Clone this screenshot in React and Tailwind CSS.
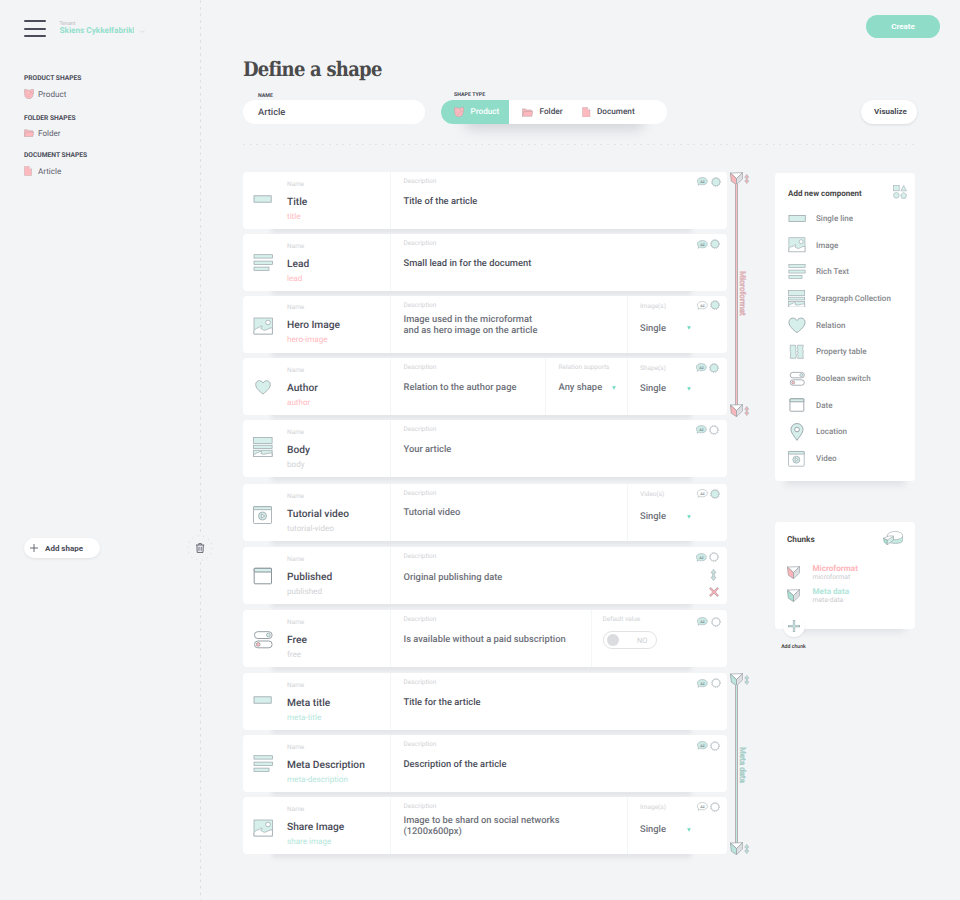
import React from 'react';
import clsx from 'clsx';

const LINE = '#9aa5ab';
const MINT = '#d6efeb';

/* ---------- icons ---------- */

function SingleLineIcon({ className }) {
  return (
    <svg className={className} viewBox="0 0 20 20" fill={MINT} stroke={LINE} strokeWidth="0.8">
      <rect x="1" y="6.8" width="17.2" height="6.4" />
    </svg>
  );
}

function RichTextIcon({ className }) {
  return (
    <svg className={className} viewBox="0 0 20 20" fill={MINT} stroke={LINE} strokeWidth="0.7">
      <rect x="1" y="1.7" width="18.6" height="3.4" />
      <rect x="1" y="8.1" width="18.6" height="3.4" />
      <rect x="1" y="14.1" width="15" height="3.4" />
    </svg>
  );
}

function ImageIcon({ className }) {
  return (
    <svg className={className} viewBox="0 0 20 20" fill={MINT} stroke={LINE} strokeWidth="0.7">
      <rect x="1" y="2" width="18.4" height="16" />
      <path
        d="M1 14.5c1.500-1.500 3-2.800 4.800-2.700.6-1.600 2.300-2.200 3.500-1.200-1 .2-1.600.9-1.400 2 1.500.2 2 1.700 3.600 1.700 2.400-.1 4.500-2.800 7.900-2.500V18H1z"
        fill="#fff"
      />
      <circle cx="15" cy="6.500" r="2.300" fill="#fff" />
    </svg>
  );
}

function CollectionIcon({ className }) {
  return (
    <svg className={className} viewBox="0 0 20 20" fill={MINT} stroke={LINE} strokeWidth="0.7">
      <rect x="0.500" y="0.400" width="18.600" height="6" />
      <rect x="0.500" y="8.200" width="18.600" height="3.200" />
      <rect x="0.500" y="13.200" width="18.600" height="6.400" />
      <path
        d="M.5 18c2-1.500 3.500-2.500 5-2.400.8-1.400 2.500-1.500 3.500-.6-.9.4-1.200 1-.8 1.800 3 1.500 5.500-.8 10.900-1v3.800H.5z"
        fill="#fff"
      />
    </svg>
  );
}

function HeartIcon({ className }) {
  return (
    <svg className={className} viewBox="0 0 20 20" fill={MINT} stroke={LINE} strokeWidth="0.8">
      <path d="M10 17C6.500 14.300 2.700 11.200 2.700 7.500c0-4.200 5.200-5.200 7.300-1.500 2.100-3.700 7.300-2.700 7.300 1.500 0 3.700-3.800 6.800-7.300 9.500z" />
    </svg>
  );
}

function TableIcon({ className }) {
  return (
    <svg className={className} viewBox="0 0 20 20" fill={MINT} stroke={LINE} strokeWidth="0.7">
      <path d="M2.500 2.500h6.300l-.5 2 1 1.500-.8 2 1 2-.8 2 1 1.700-.7 3.800H2.500l.6-5-.6-3z" />
      <path d="M11 2.500h6.500l-.8 4 .8 3-.5 4 .5 4H11l.6-3-1-1.500.9-2-.9-2 .8-2-.9-2z" />
    </svg>
  );
}

function SwitchIcon({ className }) {
  return (
    <svg className={className} viewBox="0 0 20 20" fill="#fff" stroke="#8b949b" strokeWidth="0.9">
      <rect x="1.500" y="1.700" width="17.600" height="6.800" rx="3.300" />
      <circle cx="15.400" cy="5.100" r="1.900" fill={MINT} strokeWidth="0.700" />
      <rect x="1.500" y="11" width="17.600" height="6.800" rx="3.300" />
      <circle cx="5.200" cy="14.400" r="1.900" fill="#ffb9bd" strokeWidth="0.700" />
    </svg>
  );
}

function DateIcon({ className }) {
  return (
    <svg className={className} viewBox="0 0 20 20" fill="#fff" stroke="#8b949b" strokeWidth="1">
      <rect x="1.200" y="2.300" width="17.300" height="15.500" rx="0.800" />
      <rect x="1.200" y="2.300" width="17.300" height="3.700" rx="0.600" fill={MINT} />
    </svg>
  );
}

function VideoIcon({ className }) {
  return (
    <svg className={className} viewBox="0 0 20 20" fill="#fff" stroke={LINE} strokeWidth="0.8">
      <rect x="0.500" y="1.700" width="18" height="16.800" rx="0.800" />
      <rect x="0.500" y="1.700" width="18" height="3" rx="0.500" fill={MINT} />
      <circle cx="9.500" cy="11" r="4" fill={MINT} />
      <path d="M8.300 8.900v4.200l3.500-2.100z" fill="#fff" />
    </svg>
  );
}

function PinIcon({ className }) {
  return (
    <svg className={className} viewBox="0 0 20 20" fill={MINT} stroke="#8b949b" strokeWidth="0.9">
      <path d="M10 19.300C6.800 14.500 3.300 10.800 3.300 7.100a6.700 6.500 0 0 1 13.400 0c0 3.700-3.500 7.400-6.700 12.200z" />
      <circle cx="10" cy="7.200" r="2.600" fill="#fff" />
    </svg>
  );
}

function ProductIcon({ className }) {
  return (
    <svg className={className} viewBox="0 0 20 20" fill="#fdb9be" stroke="#b9a0a6" strokeWidth="1">
      <path d="M.8 1l5 .3 3 1h4L14 1h5.300v8.500L18 11c.2 5-2.900 8.200-7.500 8.400C5.500 19.600 2 17 1.600 12.500 1.600 9 .5 5 .8 1z" />
      <path d="M12.300 3l.7 4.800 5 .7M2 5.500L5.300 4" fill="none" />
      <path d="M5 10.500h1.500M11 11h1.500M7 14.500c1.500 1 3.500.5 4.500-.8" fill="none" />
    </svg>
  );
}

function FolderIcon({ className }) {
  return (
    <svg className={className} viewBox="0 0 20 20" fill="#fdb9be" stroke="#b39aa0" strokeWidth="0.9">
      <path d="M.8 17V3.500h6L8.300 5.500H17.500v3" />
      <path d="M.8 17L3.500 8h16l-1.700 9z" />
    </svg>
  );
}

function DocIcon({ className }) {
  return (
    <svg className={className} viewBox="0 0 16 20" fill="#fdb9be" stroke="#c0a3a9" strokeWidth="0.9">
      <path d="M1 .8h9l5 5v13.400H1z" />
      <path d="M10 .8v5h5" fill="#fff" />
    </svg>
  );
}

function Wedge({ className, color }) {
  return (
    <svg className={className} viewBox="0 0 38 38" stroke="#8f9499" strokeWidth="1.800" strokeLinejoin="round">
      <path d="M1 3L37 2 19 19z" fill="#fff" />
      <path d="M1 3l18 16v18L4 27z" fill={color} />
      <path d="M19 19L37 2v18L19 37z" fill="#e3e5e8" />
      <path d="M24 18v10M29 13v10M33 9v10" stroke="#c9cdd1" strokeWidth="1.200" />
    </svg>
  );
}

function UpDown({ className, color }) {
  return (
    <svg className={className} viewBox="0 0 10 18" fill={color} stroke={LINE} strokeWidth="0.900">
      <path d="M5 .6L8.800 5.800H6.200v6.400h2.600L5 17.400 1.200 12.200h2.600V5.800H1.200z" />
    </svg>
  );
}

function CheeseIcon({ className }) {
  return (
    <svg className={className} viewBox="0 0 62 44" fill="#fff" stroke="#8f9aa0" strokeWidth="1.600" strokeLinejoin="round">
      <path d="M13 14v15c6 12 46 12 47-1V14z" fill="#c5eae2" />
      <ellipse cx="36.500" cy="14" rx="23.500" ry="12.500" />
      <path d="M1 22l18-7h13l-1 10-12 5z" />
      <path d="M1 22l12 6v14L3 33z" fill="#a9e2d5" />
      <path d="M13 28l18-12v12L13 42z" fill="#d6efeb" />
    </svg>
  );
}

function ShapesIcon({ className }) {
  return (
    <svg className={className} viewBox="0 0 42 42" fill={MINT} stroke={LINE} strokeWidth="1.600">
      <rect x="1.500" y="1.500" width="17" height="16" />
      <path d="M32 1.500l8.500 16h-17z" />
      <circle cx="10" cy="31" r="8.500" />
      <path d="M32 22.500l9 6.500-3.500 11h-11L23 29z" />
    </svg>
  );
}

function TranslateBadge({ on }) {
  return (
    <svg className="h-[9px] w-[11px]" viewBox="0 0 33 27">
      <path
        d="M16 1.500c8.500 0 15 4.500 15 11s-6 11-15 11c-3 0-5.500-.5-8-1.500L3 25l1.500-5C2 18 1 15 1 12.500c0-6.500 7-11 15-11z"
        fill={on ? '#cdebe6' : '#fff'}
        stroke={LINE}
        strokeWidth="1.500"
      />
      <text x="16.500" y="16.500" textAnchor="middle" fontSize="11" fontWeight="700" fontFamily="Roboto" fill="#7e8a90">
        AZ
      </text>
    </svg>
  );
}

function Gear({ on }) {
  return (
    <svg className="size-[10px]" viewBox="0 0 30 30">
      <circle cx="15" cy="15" r="13.300" fill="none" stroke={LINE} strokeWidth="2" strokeDasharray="3 3.960" />
      <circle cx="15" cy="15" r="11.800" fill={on ? '#d3efea' : '#fff'} stroke="#a9b2b7" strokeWidth="2" />
    </svg>
  );
}

/* ---------- data ---------- */

const fields = [
  { name: 'Title', slug: 'title', tone: 'pink', Icon: SingleLineIcon, iconTop: 'pt-[16.5px]', desc: ['Title of the article'], strong: true, az: true, gear: true, gap: 'mb-[5px]', tools: 'top-[4.7px] right-[6.5px]' },
  { name: 'Lead', slug: 'lead', tone: 'pink', Icon: RichTextIcon, iconTop: 'pt-[19px]', desc: ['Small lead in for the document'], strong: true, az: true, gear: true, gap: 'mb-[4.500px]', tools: 'top-[5.2px] right-[7px]' },
  { name: 'Hero Image', slug: 'hero-image', tone: 'pink', Icon: ImageIcon, iconTop: 'pt-[20.7px]', desc: ['Image used in the microformat', 'and as hero image on the article'], descTop: '-mt-[0.5px]', az: false, gear: true, gap: 'mb-[5.500px]', tools: 'top-[4.7px] right-[7px]', select: 'Image(s)', selectLead: 'leading-[24px]' },
  { name: 'Author', slug: 'author', tone: 'pink', Icon: HeartIcon, iconTop: 'pt-[18.5px]', desc: ['Relation to the author page'], az: true, gear: true, gap: 'mb-[5px]', tools: 'top-[4.7px] right-[7.7px]', relation: true, select: 'Shape(s)', selectLead: 'leading-[20px]' },
  { name: 'Body', slug: 'body', tone: 'gray', Icon: CollectionIcon, iconTop: 'pt-[17.3px]', desc: ['Your article'], descTop: '-mt-[0.5px]', az: true, gear: false, gap: 'mb-[7px]', tools: 'top-[4.8px] right-[7.7px]' },
  { name: 'Tutorial video', slug: 'tutorial-video', tone: 'gray', Icon: VideoIcon, iconTop: 'pt-[21px]', desc: ['Tutorial video'], descTop: '-mt-px', az: false, gear: true, gap: 'mb-[6px]', tools: 'top-[4.6px] right-[7px]', select: 'Video(s)', selectLead: 'leading-[24px]' },
  { name: 'Published', slug: 'published', tone: 'gray', Icon: DateIcon, iconTop: 'pt-[19px]', desc: ['Original publishing date'], descTop: 'pt-[0.6px]', az: true, gear: false, gap: 'mb-[6px]', tools: 'top-[5px] right-[7.7px]', active: true },
  { name: 'Free', slug: 'free', tone: 'gray', Icon: SwitchIcon, iconTop: 'pt-[19.5px]', desc: ['Is available without a paid subscription'], descTop: '-mt-[0.5px]', az: true, gear: false, gap: 'mb-[6px]', tools: 'top-[6.500px] right-[6.5px]', toggle: true },
  { name: 'Meta title', slug: 'meta-title', tone: 'mint', Icon: SingleLineIcon, iconTop: 'pt-[17px]', desc: ['Title for the article'], strong: true, az: true, gear: false, gap: 'mb-[5px]', tools: 'top-[5px] right-[6.5px]' },
  { name: 'Meta Description', slug: 'meta-description', tone: 'mint', Icon: RichTextIcon, iconTop: 'pt-[19px]', desc: ['Description of the article'], strong: true, az: true, gear: false, gap: 'mb-[5px]', tools: 'top-[5.500px] right-[7px]' },
  { name: 'Share Image', slug: 'share image', tone: 'mint', Icon: ImageIcon, iconTop: 'pt-[21px]', desc: ['Image to be shard on social networks', '(1200x600px)'], descTop: '-mt-px', az: false, gear: false, gap: '', tools: 'top-[4.500px] right-[7px]', select: 'Image(s)', selectLead: 'leading-[24px]' },
];

const components = [
  ['Single line', SingleLineIcon, 'size-[19px]'],
  ['Image', ImageIcon, 'size-[17.5px]'],
  ['Rich Text', RichTextIcon, 'size-[17.5px]'],
  ['Paragraph Collection', CollectionIcon, 'size-[17.5px]'],
  ['Relation', HeartIcon, 'size-[22px]'],
  ['Property table', TableIcon, 'size-[17.5px]'],
  ['Boolean switch', SwitchIcon, 'size-[16px]'],
  ['Date', DateIcon, 'size-[16px]'],
  ['Location', PinIcon, 'size-[18px]'],
  ['Video', VideoIcon, 'size-[17.5px]'],
];

const tones = {
  pink: 'text-[#ffb9bd]',
  gray: 'text-[#d0d2d5]',
  mint: 'text-[#b3e6da]',
};

/* ---------- pieces ---------- */

function Label({ children, className }) {
  return <p className={clsx('text-[6.5px] text-[#d0d2d5]', className)}>{children}</p>;
}

function Select({ value, className }) {
  return (
    <div className={clsx('flex items-center justify-between text-[9.4px] font-medium text-[#6d7079]', className)}>
      <span>{value}</span>
      <svg className="-mt-px size-[4px]" viewBox="0 0 8 8">
        <path d="M.2.500h7.600L4 7.500z" fill="#6fd9bf" />
      </svg>
    </div>
  );
}

function FieldCard({ field }) {
  const { Icon } = field;
  return (
    <div className={clsx('relative', field.gap)}>
      <div className="absolute right-[36px] -bottom-[4px] left-[29px] h-[12px] bg-[#e2e4e7] blur-[2px]" />
      <div className="relative flex h-[57px] w-[484px] rounded-[4px] bg-white">
        <div className={clsx('w-[44px] pl-[10px]', field.iconTop)}>
          <Icon className="size-[20px]" />
        </div>
        <div className="w-[104px] border-r border-[#f4f5f6]">
          <Label className="pt-[0.5px] leading-[23px]">Name</Label>
          <p className="text-[10.2px] leading-[13px] font-medium whitespace-nowrap text-[#474956]">{field.name}</p>
          <p className={clsx('text-[8.1px] leading-[15px]', tones[field.tone])}>{field.slug}</p>
        </div>
        <div className="flex-1 pl-[12.5px]">
          <Label className="pb-[1.5px] leading-[18.5px]">Description</Label>
          <div
            className={clsx(
              'text-[9.35px] font-medium whitespace-nowrap',
              field.strong ? 'text-[#4b4d5a]' : 'text-[#6d7079]',
              field.desc.length > 1 ? 'leading-[10.7px]' : 'leading-[20px]',
              field.descTop
            )}
          >
            {field.desc.map((line) => (
              <p key={line}>{line}</p>
            ))}
          </div>
        </div>
        {field.relation && (
          <div className="w-[82px] border-l border-[#f4f5f6] pl-[12.5px]">
            <Label className="pb-[1.5px] leading-[18.5px]">Relation supports</Label>
            <Select value="Any shape" className="w-[57px] leading-[20px]" />
          </div>
        )}
        {field.select && (
          <div className="w-[100px] border-l border-[#f4f5f6] pl-[12px]">
            <Label className="pb-px leading-[20px]">{field.select}</Label>
            <Select value="Single" className={clsx('w-[51px]', field.selectLead)} />
          </div>
        )}
        {field.toggle && (
          <div className="w-[136px] border-l border-[#f4f5f6] pl-[10.5px]">
            <Label className="pb-[0.5px] leading-[18.5px]">Default value</Label>
            <div className="mt-[2px] flex h-[18px] w-[54px] items-center justify-between rounded-full border border-[#e0e2e4] pr-[8px] pl-[3.5px]">
              <span className="size-[11.500px] rounded-full bg-[#dadcdf]" />
              <span className="pt-[0.5px] text-[7.500px] text-[#cdd0d3]">NO</span>
            </div>
          </div>
        )}
        <div className={clsx('absolute flex items-center gap-[2.5px]', field.tools)}>
          <TranslateBadge on={field.az} />
          <Gear on={field.gear} />
        </div>
        {field.active && (
          <div className="absolute top-[21.500px] right-[8.5px] flex flex-col items-center gap-[6px]">
            <UpDown className="h-[12px] w-[7px]" color="#cdebe6" />
            <svg className="size-[10px]" viewBox="0 0 20 20">
              <path d="M2 2l16 16M18 2L2 18" stroke="#a8979d" strokeWidth="4.600" />
              <path d="M2.800 2.800l14.400 14.400M17.200 2.800L2.800 17.200" stroke="#fbb4b9" strokeWidth="2.800" />
            </svg>
          </div>
        )}
      </div>
    </div>
  );
}

function Rail({ label, color, className, barClass, labelClass }) {
  const end = (
    <div className="flex items-center gap-[1px]">
      <Wedge className="size-[13px]" color={color} />
      <UpDown className="h-[10px] w-[5.500px]" color={color} />
    </div>
  );
  return (
    <div className={clsx('flex flex-col', className)}>
      {end}
      <div className="-my-px flex flex-1 items-center pl-[5px]">
        <div className={clsx('w-[3px] self-stretch border-x border-[#b5afb4]', barClass)} />
        <span className={clsx('text-[8px] leading-[8px] font-medium [writing-mode:vertical-rl]', labelClass)}>{label}</span>
      </div>
      {end}
    </div>
  );
}

function ShapeGroup({ title, name, icon, className, rowClass }) {
  return (
    <div className={className}>
      <h3 className="text-[6.700px] leading-[8px] font-bold text-[#4a4c58]">{title}</h3>
      <div className={clsx('flex h-[11px] items-center text-[8.1px] text-[#5d606c]', rowClass)}>
        <span className="mr-[4px] flex w-[10px]">{icon}</span>
        {name}
      </div>
    </div>
  );
}

function Sidebar() {
  return (
    <aside className="relative h-full w-[201px] shrink-0 bg-[radial-gradient(circle,#d5d7db_0.9px,transparent_1px)] bg-[length:3px_6.62px] bg-[position:199px_5px] bg-repeat-y pl-[24px]">
      <div className="flex pt-[20px]">
        <div className="flex w-[22px] flex-col gap-[5.7px]">
          <span className="h-[2px] rounded bg-[#4b4c59]" />
          <span className="h-[2px] rounded bg-[#4b4c59]" />
          <span className="h-[2px] rounded bg-[#4b4c59]" />
        </div>
        <div className="ml-[13.500px]">
          <p className="mt-px text-[5.200px] leading-[6px] text-[#b7babf]">Tenant</p>
          <div className="flex items-center">
            <p className="w-[74.500px] overflow-hidden text-[8.2px] leading-[8px] font-bold whitespace-nowrap text-[#93e0cd]">Skiens Cykkelfabrikk</p>
            <svg className="ml-[6px] h-[3px] w-[5px]" viewBox="0 0 10 6" fill="none" stroke="#d0d3d7" strokeWidth="1.500">
              <path d="M1 1l4 4 4-4" />
            </svg>
          </div>
        </div>
      </div>

      <ShapeGroup className="mt-[37px]" rowClass="mt-[6px]" title="PRODUCT SHAPES" name="Product" icon={<ProductIcon className="size-[10px]" />} />
      <ShapeGroup className="mt-[15px]" rowClass="mt-[5px]" title="FOLDER SHAPES" name="Folder" icon={<FolderIcon className="size-[10px]" />} />
      <ShapeGroup className="mt-[13px]" rowClass="mt-[6.500px]" title="DOCUMENT SHAPES" name="Article" icon={<DocIcon className="h-[10px] w-[8px]" />} />

      <button className="absolute top-[538px] left-[24px] flex h-[20px] w-[76px] items-center rounded-full bg-white pl-[6px] text-[8px] font-bold text-[#474956] shadow-[0_1px_3px_rgba(0,0,0,0.08)]">
        <svg className="mr-[7px] size-[8px]" viewBox="0 0 8 8" stroke="#474956" strokeWidth="0.8">
          <path d="M4 0v8M0 4h8" />
        </svg>
        <span className="pt-px">Add shape</span>
      </button>

      <div className="absolute top-[535px] left-[187px] flex size-[26px] items-center justify-center rounded-full bg-[#f3f4f6]">
        <svg className="size-[26px]" viewBox="0 0 26 26" fill="none" stroke="#555764" strokeWidth="0.9">
          <circle cx="13" cy="13" r="12.300" stroke="#cfd2d6" strokeDasharray="1 4.520" />
          <path d="M9 10h8.200M11.700 9.800V8.700h2.800v1.100M9.900 10.200l.3 7.200h5.800l.3-7.200M12 11.800v4M14.200 11.800v4" />
        </svg>
      </div>
    </aside>
  );
}

function Header() {
  return (
    <header className="h-[172px]">
      <div className="flex h-[57px] justify-end pt-[15px] pr-[20px]">
        <button className="h-[23px] w-[74px] rounded-full bg-[#8fddc9] text-[8px] font-bold text-white">Create</button>
      </div>
      <h1 className="h-[34px] text-[20px] leading-[24px] font-bold tracking-[-0.76px] whitespace-nowrap text-[#4b4b4b] font-['DejaVu_Serif_Condensed','DejaVu_Serif',serif] [font-stretch:condensed]">
        Define a shape
      </h1>
      <div className="flex">
        <div className="w-[182px]">
          <p className="pt-px pl-[15px] text-[5.300px] leading-[8px] font-bold text-[#474956]">NAME</p>
          <div className="h-[24px] rounded-full bg-white pt-px pl-[15px] text-[9.300px] leading-[23px] font-medium text-[#4f515d]">Article</div>
        </div>
        <div className="relative ml-[16px] w-[226px]">
          <p className="pt-[0.5px] pb-[1.500px] pl-[13px] text-[5.300px] leading-[7px] font-bold text-[#474956]">SHAPE TYPE</p>
          <div className="absolute right-[22px] -bottom-[6px] left-[22px] h-[18px] rounded-full bg-[#d3d6db] blur-[6px]" />
          <div className="relative flex h-[24px] overflow-hidden rounded-full bg-white text-[8.200px] font-medium text-[#474956]">
            <div className="flex w-[68px] items-center bg-[#8fddc9] pl-[13px] text-white">
              <ProductIcon className="mr-[6.500px] size-[10px]" />
              <span className="pt-px">Product</span>
            </div>
            <div className="flex w-[73px] items-center pl-[13px]">
              <FolderIcon className="mr-[6.500px] size-[11px]" />
              <span className="pt-px">Folder</span>
            </div>
            <div className="flex items-center">
              <DocIcon className="mr-[6.5px] h-[10.500px] w-[8.500px]" />
              <span className="pt-px">Document</span>
            </div>
          </div>
        </div>
        <button className="mt-[9px] ml-[194px] h-[24px] w-[56px] rounded-full bg-white pl-[3px] text-[8px] font-bold text-[#474956] shadow-[0_1px_3px_rgba(0,0,0,0.1)]">Visualize</button>
      </div>
      <div className="mt-[20px] h-px w-[674px] bg-[repeating-linear-gradient(90deg,#e2e4e8_0_2px,transparent_2px_6.62px)]" />
    </header>
  );
}

function ChunkRow({ name, slug, color, className }) {
  return (
    <div className="flex h-[23.300px] items-start">
      <Wedge className="mt-[2px] mr-[12.5px] size-[13px]" color={color} />
      <div>
        <p className={clsx('text-[8.1px] leading-[9px] font-bold', className)}>{name}</p>
        <p className="text-[6.800px] leading-[8px] text-[#c9cbce]">{slug}</p>
      </div>
    </div>
  );
}

function Aside() {
  return (
    <div className="ml-[24px] w-[140px] pt-[1px]">
      <section className="relative">
        <div className="absolute right-[10px] -bottom-[4px] left-[10px] h-[12px] bg-[#dfe1e5] blur-[3px]" />
        <div className="relative h-[308px] rounded-[4px] bg-white pt-[12px] pr-[8px] pl-[13px]">
          <div className="flex h-[20px] items-start justify-between">
            <h2 className="text-[8px] leading-[17px] font-bold text-[#474747]">Add new component</h2>
            <ShapesIcon className="size-[14px]" />
          </div>
          {components.map(([label, Icon, size]) => (
            <div key={label} className="flex h-[26.670px] items-center pt-[0.5px] text-[8px] font-medium text-[#85878c]">
              <span className="mr-[19px] flex w-[9px] justify-center pl-[9px]">
                <Icon className={clsx('shrink-0', size)} />
              </span>
              <span className="pt-px">{label}</span>
            </div>
          ))}
        </div>
      </section>

      <section className="relative mt-[41px]">
        <div className="absolute top-[98px] right-[10px] left-[22px] h-[12px] bg-[#dfe1e5] blur-[3px]" />
        <div className="relative h-[107px] rounded-[4px] bg-white pt-[8.500px] pr-[12px] pl-[12px]">
          <div className="flex h-[33px] items-start justify-between">
            <h2 className="text-[8.200px] leading-[18px] font-bold text-[#474747]">Chunks</h2>
            <CheeseIcon className="h-[14.500px] w-[20.500px]" />
          </div>
          <ChunkRow name="Microformat" slug="microformat" color="#ffb4b9" className="text-[#ffb4b9]" />
          <ChunkRow name="Meta data" slug="meta-data" color="#a9e2d5" className="text-[#b0e5d9]" />
        </div>
        <div className="relative z-10 -mt-[14px] ml-[6px] w-[25px] text-center">
          <div className="mx-auto flex size-[22px] items-center justify-center rounded-full bg-white shadow-[0_1px_2px_rgba(0,0,0,0.08)]">
            <svg className="size-[12px]" viewBox="0 0 24 24">
              <path d="M12 0v24M0 12h24" stroke={LINE} strokeWidth="4.500" />
              <path d="M12 1.200v21.600M1.200 12h21.600" stroke="#cdebe6" strokeWidth="2.400" />
            </svg>
          </div>
          <p className="mt-[6px] text-[5.200px] leading-[8px] font-medium whitespace-nowrap text-[#333]">Add chunk</p>
        </div>
      </section>
    </div>
  );
}

export default function App() {
  return (
    <div className="flex h-[900px] w-[960px] overflow-hidden bg-[#f3f4f6] font-['Roboto',sans-serif] [text-rendering:geometricPrecision]">
      <Sidebar />
      <main className="flex-1 pl-[42px]">
        <Header />
        <div className="flex">
          <div className="w-[484px]">
            {fields.map((field) => (
              <FieldCard key={field.slug} field={field} />
            ))}
          </div>
          <div className="ml-[3px] w-[21px]">
            <Rail
              className="h-[245px]"
              label="Microformat"
              color="#f9b6bb"
              barClass="bg-[#fbbfc3]"
              labelClass="pb-[3px] text-[#fbc3c7] [-webkit-text-stroke:0.4px_#cfa9ae]"
            />
            <Rail
              className="mt-[256px] h-[182px]"
              label="Meta data"
              color="#bce5de"
              barClass="bg-[#bfe9e0]"
              labelClass="pt-[2px] text-[#bfe9e0] [-webkit-text-stroke:0.4px_#9fc4bf]"
            />
          </div>
          <Aside />
        </div>
      </main>
    </div>
  );
}
